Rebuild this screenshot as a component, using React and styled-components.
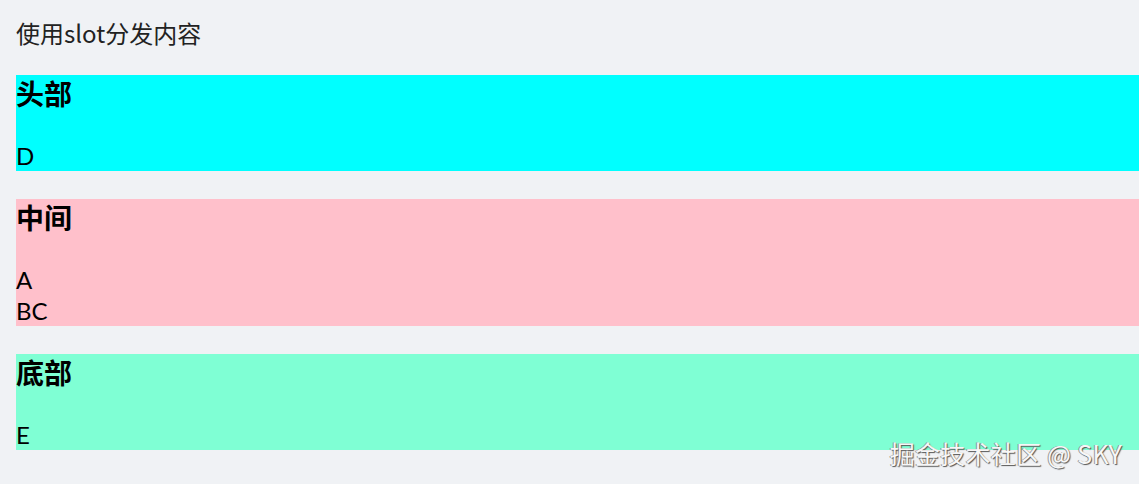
import React from 'react';
import styled, { createGlobalStyle } from 'styled-components';

const GlobalStyle = createGlobalStyle`
  html, body {
    margin: 0;
    padding: 0;
    background: #f0f2f5;
  }
  body {
    font-family: 'Noto Sans CJK SC', 'Noto Sans', sans-serif;
    color: #000;
  }
`;

const Page = styled.div`
  position: relative;
  min-height: 484px;
  padding: 17px 0 0 16px;
  box-sizing: border-box;
`;

const Title = styled.div`
  font-size: 24px;
  line-height: 31px;
  color: #222;
`;

const Section = styled.div`
  background: ${(p) => p.$bg};
  margin-top: ${(p) => (p.$first ? '27px' : '28px')};
`;

const Heading = styled.h3`
  margin: 0 0 28px;
  font-size: 28px;
  line-height: 37px;
  font-weight: 700;
`;

const Line = styled.div`
  font-size: 24px;
  line-height: 31px;
  font-family: 'Lato', 'Noto Sans', sans-serif;
`;

const Watermark = styled.div`
  position: absolute;
  right: 17px;
  bottom: 15px;
  font-size: 25px;
  line-height: 31px;
  letter-spacing: 0.3px;
  color: #f7f7f7;
  text-shadow: 1px 1px 1px #555, -1px 0 0 #999;
`;

const Slot = ({ title, bg, first, lines }) => (
  <Section $bg={bg} $first={first}>
    <Heading>{title}</Heading>
    {lines.map((l) => (
      <Line key={l}>{l}</Line>
    ))}
  </Section>
);

const App = () => {
  return (
    <>
      <GlobalStyle />
      <Page>
        <Title>使用slot分发内容</Title>
        <Slot title='头部' bg='#00ffff' first lines={['D']} />
        <Slot title='中间' bg='#ffc0cb' lines={['A', 'BC']} />
        <Slot title='底部' bg='#7fffd4' lines={['E']} />
        <Watermark>掘金技术社区 @ SKY</Watermark>
      </Page>
    </>
  );
};

export default App;
